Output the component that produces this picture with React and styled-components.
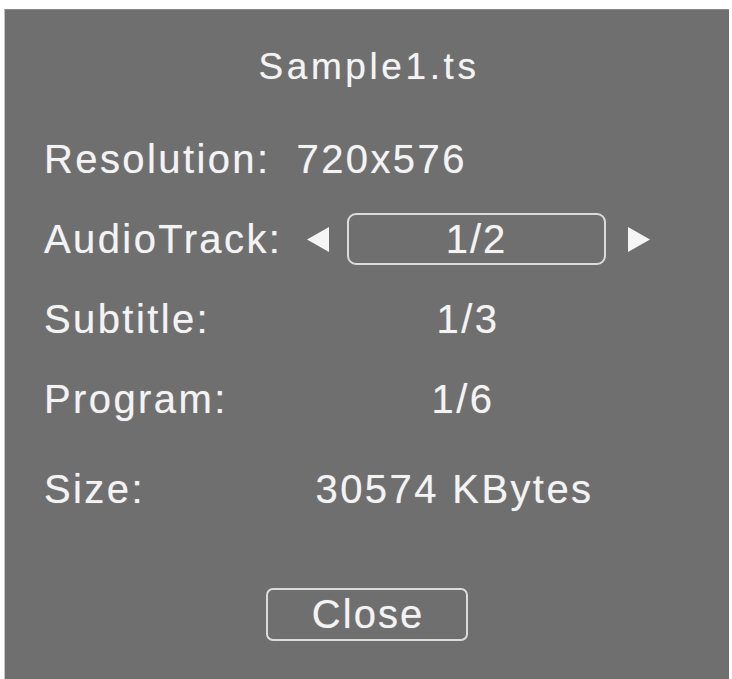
import React from "react";
import styled, { createGlobalStyle } from "styled-components";

const GlobalStyle = createGlobalStyle`
  html, body {
    margin: 0;
    padding: 0;
    background: #ffffff;
    overflow: hidden;
  }
  body {
    font-family: "Liberation Sans", Arial, sans-serif;
  }
`;

const Panel = styled.div`
  box-sizing: border-box;
  margin: 9px 0 0 4px;
  width: 725px;
  height: 670px;
  background: #6f6f6f;
  border-left: 1px solid #c4c4c4;
  border-top: 1px solid #8a8a8a;
  display: flex;
  flex-direction: column;
  padding: 35px 0 0 39px;
  color: #f3f3f3;
  text-shadow: 0 0 1px rgba(255, 255, 255, 0.45);
`;

const Title = styled.div`
  font-size: 37px;
  line-height: 44px;
  letter-spacing: 3.6px;
  text-align: center;
  margin-left: -39px;
  padding-left: 4px;
`;

const Rows = styled.div`
  display: grid;
  grid-template-columns: 259px 44px 259px 50px;
  row-gap: 28px;
  margin-top: 44px;
`;

const Cell = styled.div`
  font-size: 40px;
  line-height: 52px;
  height: 52px;
  letter-spacing: 2.4px;
  white-space: nowrap;
  margin-top: ${(p) => p.$extra || 0}px;
`;

const Label = styled(Cell)`
  grid-column: ${(p) => (p.$wide ? "1 / 5" : "1")};
  display: flex;
`;

const Inline = styled.span`
  margin-left: 26px;
`;

const Value = styled(Cell)`
  grid-column: 2 / 4;
  text-align: center;
  padding-left: ${(p) => p.$pad || 0}px;
`;

const ArrowCell = styled.div`
  display: flex;
  align-items: center;
  padding-left: ${(p) => p.$offset}px;
`;

const Selector = styled.div`
  box-sizing: border-box;
  height: 52px;
  border: 2px solid #dcdcdc;
  border-radius: 9px;
  font-size: 40px;
  line-height: 48px;
  letter-spacing: 2px;
  text-align: center;
`;

const CloseButton = styled.button`
  align-self: center;
  box-sizing: border-box;
  width: 202px;
  height: 53px;
  margin: 73px 0 0 -39px;
  background: transparent;
  border: 2px solid #dcdcdc;
  border-radius: 7px;
  color: #f3f3f3;
  font-family: "Liberation Sans", Arial, sans-serif;
  font-size: 40px;
  line-height: 49px;
  letter-spacing: 2px;
  text-shadow: 0 0 1px rgba(255, 255, 255, 0.45);
  padding: 0 0 0 2px;
`;

function Triangle({ dir }) {
  const pts = dir === "left" ? "22,0 0,12.5 22,25" : "0,0 22,12.5 0,25";
  return (
    <svg width="22" height="25" viewBox="0 0 22 25">
      <polygon points={pts} fill="#f5f5f5" />
    </svg>
  );
}

const info = [
  { label: "Subtitle:", value: "1/3", pad: 27 },
  { label: "Program:", value: "1/6", pad: 17 },
  { label: "Size:", value: "30574 KBytes", pad: 0, extra: 10 },
];

export default function App() {
  return (
    <>
      <GlobalStyle />
      <Panel>
        <Title>Sample1.ts</Title>
        <Rows>
          <Label $wide>
            Resolution:<Inline>720x576</Inline>
          </Label>

          <Label>AudioTrack:</Label>
          <ArrowCell $offset={4}>
            <Triangle dir="left" />
          </ArrowCell>
          <Selector>1/2</Selector>
          <ArrowCell $offset={22}>
            <Triangle dir="right" />
          </ArrowCell>

          {info.map((r) => (
            <React.Fragment key={r.label}>
              <Label $extra={r.extra}>{r.label}</Label>
              <Value $pad={r.pad} $extra={r.extra}>
                {r.value}
              </Value>
            </React.Fragment>
          ))}
        </Rows>
        <CloseButton>Close</CloseButton>
      </Panel>
    </>
  );
}
